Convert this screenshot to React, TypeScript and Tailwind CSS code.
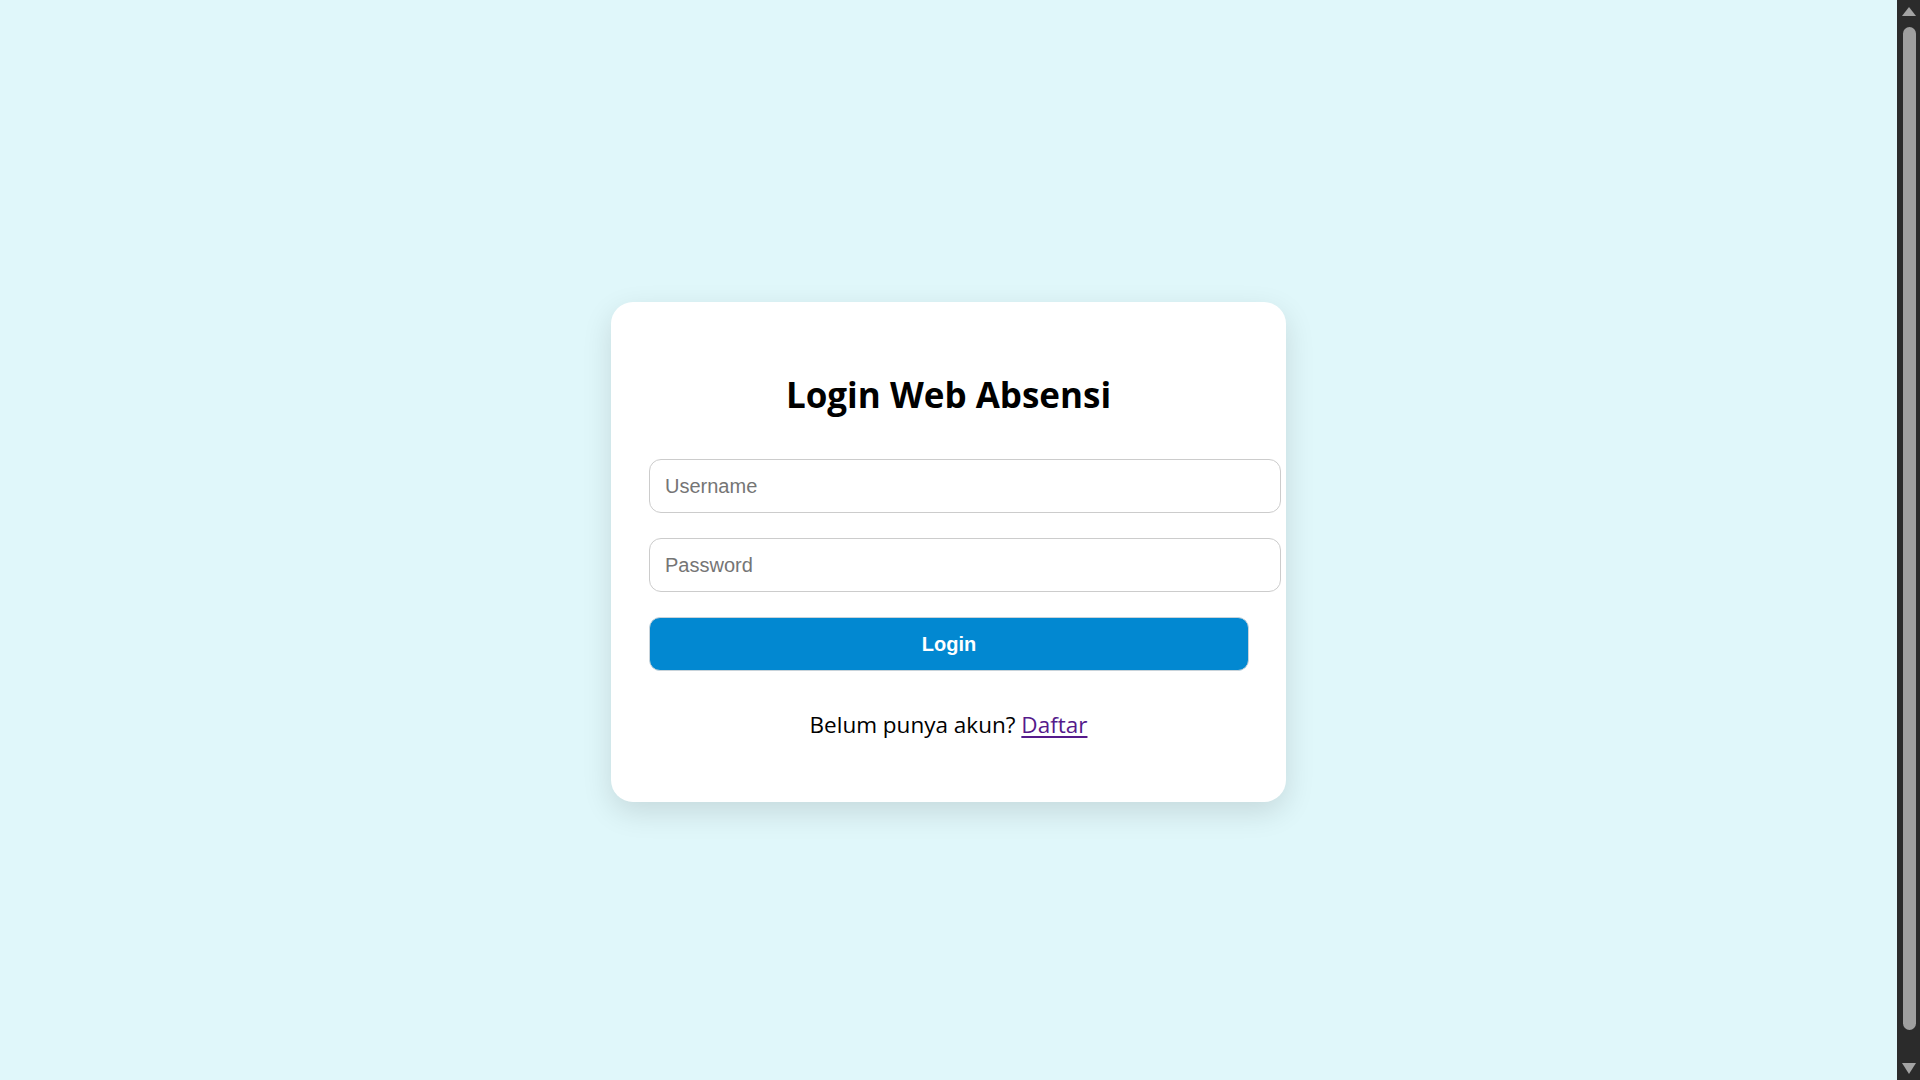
import { useState } from 'react';

export default function App() {
  const [form, setForm] = useState({ username: '', password: '' });

  return (
    <div className="flex h-screen overflow-hidden">
      <main className="flex-1 bg-[#e0f7fa] flex items-center justify-center pt-[24px] font-['Open_Sans',sans-serif]">
        <form
          onSubmit={e => e.preventDefault()}
          className="w-[675px] bg-white rounded-[22px] px-[38px] pt-[73px] pb-[63px] shadow-[0_10px_30px_rgba(0,0,0,0.12)]"
        >
          <h2 className="text-center text-[35px] leading-[40px] font-bold text-black mb-[44px]">
            Login Web Absensi
          </h2>

          <input
            type="text"
            placeholder="Username"
            value={form.username}
            onChange={e => setForm(f => ({ ...f, username: e.target.value }))}
            className="block w-[632px] h-[54px] px-[15px] border border-[#ccc] rounded-[12px] bg-white text-[20px] font-['Liberation_Sans',Arial,sans-serif] text-black placeholder:text-[#757575] outline-none mb-[25px]"
          />
          <input
            type="password"
            placeholder="Password"
            value={form.password}
            onChange={e => setForm(f => ({ ...f, password: e.target.value }))}
            className="block w-[632px] h-[54px] px-[15px] border border-[#ccc] rounded-[12px] bg-white text-[20px] font-['Liberation_Sans',Arial,sans-serif] text-black placeholder:text-[#757575] outline-none mb-[25px]"
          />

          <button
            type="submit"
            className="block w-[600px] h-[54px] bg-[#0288d1] border border-[#c8d3da] rounded-[11px] text-white text-[20px] font-bold font-['Liberation_Sans',Arial,sans-serif] cursor-pointer"
          >
            Login
          </button>

          <p className="mt-[40px] text-center text-[22.5px] leading-[28px] text-black">
            Belum punya akun?{' '}
            <a href="#" className="text-[#551a8b] underline underline-offset-[3px]">
              Daftar
            </a>
          </p>
        </form>
      </main>

      {/* window scrollbar */}
      <div className="w-[23px] bg-[#2b2b2b] flex flex-col items-center pt-[7px]">
        <svg width="14" height="9" viewBox="0 0 14 9" className="ml-[1px]">
          <path d="M7 0 L14 9 L0 9 Z" fill="#a3a3a3" />
        </svg>
        <div className="w-[13px] h-[1003px] mt-[11px] ml-[1px] rounded-full bg-[#9f9f9f]" />
        <svg width="14" height="11" viewBox="0 0 14 11" className="mt-[33px] ml-[1px]">
          <path d="M0 0 L14 0 L7 11 Z" fill="#a3a3a3" />
        </svg>
      </div>
    </div>
  );
}
